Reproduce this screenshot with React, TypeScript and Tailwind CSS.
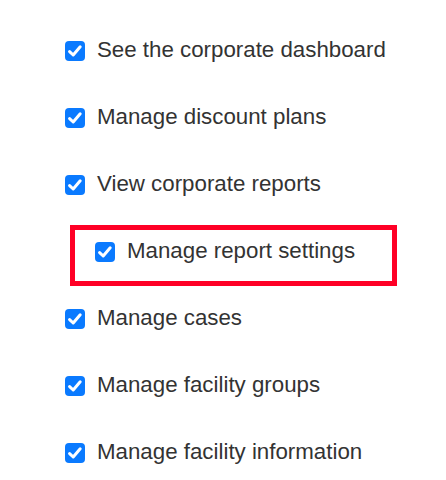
import React from "react";

function Check() {
  return (
    <span className="flex h-[20px] w-[20px] shrink-0 items-center justify-center rounded-[4px] bg-[#0a7aff]">
      <svg width="20" height="20" viewBox="0 0 20 20" fill="none">
        <path d="M4.6 10.6 L8.2 14 L15.2 5.8" stroke="white" strokeWidth="3" strokeLinecap="round" strokeLinejoin="round" />
      </svg>
    </span>
  );
}

function Row({ label, nested = false }: { label: string; nested?: boolean }) {
  return (
    <div className={"relative flex h-[67px] items-center " + (nested ? "pl-[95px]" : "pl-[65px]")}>
      {nested && (
        <span className="pointer-events-none absolute left-[70px] top-[7px] h-[61px] w-[327px] border-[5px] border-[#ff0026]" />
      )}
      <Check />
      <span className="ml-[12px] text-[22.3px] leading-none text-[#333333] [font-family:'Liberation_Sans',Arial,sans-serif]">
        {label}
      </span>
    </div>
  );
}

export default function App() {
  const items: { label: string; nested?: boolean }[] = [
    { label: "See the corporate dashboard" },
    { label: "Manage discount plans" },
    { label: "View corporate reports" },
    { label: "Manage report settings", nested: true },
    { label: "Manage cases" },
    { label: "Manage facility groups" },
    { label: "Manage facility information" },
  ];
  return (
    <div className="h-[480px] w-[446px] overflow-hidden bg-white pt-[17px]">
      {items.map((it) => (
        <Row key={it.label} label={it.label} nested={it.nested} />
      ))}
    </div>
  );
}
